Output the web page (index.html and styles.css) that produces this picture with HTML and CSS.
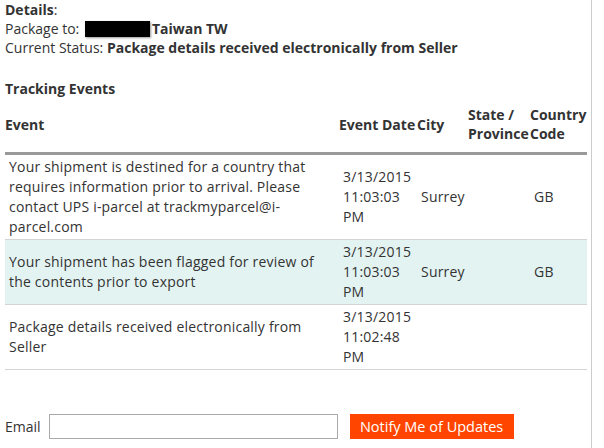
FILE: index.html
```html
<!DOCTYPE html>
<html lang="en">
  <head>
    <meta charset="utf-8" />
    <meta name="viewport" content="width=device-width, initial-scale=1" />
    <title>Tracking Details</title>
    <link rel="stylesheet" href="styles.css">
  </head>
  <body>
    <div class="page">
      <div class="details">
        <b>Details</b>:<br />
        Package to: <span class="redacted"></span><b>Taiwan TW</b><br />
        Current Status: <b>Package details received electronically from Seller</b>
      </div>

      <h3 class="section-title">Tracking Events</h3>
      <table class="events">
        <colgroup>
          <col class="col-event" />
          <col class="col-date" />
          <col class="col-city" />
          <col class="col-state" />
          <col class="col-country" />
        </colgroup>
        <thead>
          <tr>
            <th>Event</th>
            <th class="nowrap">Event Date</th>
            <th>City</th>
            <th>State / Province</th>
            <th>Country Code</th>
          </tr>
        </thead>
        <tbody>
          <tr>
            <td>Your shipment is destined for a country that requires information prior to arrival. Please contact UPS i-parcel at trackmyparcel@i-parcel.com</td>
            <td>3/13/2015 11:03:03 PM</td>
            <td>Surrey</td>
            <td></td>
            <td>GB</td>
          </tr>
          <tr class="alt">
            <td>Your shipment has been flagged for review of the contents prior to export</td>
            <td>3/13/2015 11:03:03 PM</td>
            <td>Surrey</td>
            <td></td>
            <td>GB</td>
          </tr>
          <tr>
            <td>Package details received electronically from Seller</td>
            <td>3/13/2015 11:02:48 PM</td>
            <td></td>
            <td></td>
            <td></td>
          </tr>
        </tbody>
      </table>

      <!-- notify form -->
      <form class="notify">
        <label for="email">Email</label>
        <input type="text" id="email" name="email" />
        <button type="submit">Notify Me of Updates</button>
      </form>
    </div>
  </body>
</html>
```

FILE: styles.css
```css
html, body {
  margin: 0;
  height: 100%;
}

body {
  font-family: "Open Sans", "Noto Sans", sans-serif;
  font-size: 14px;
  color: #333;
  background: #fff;
}

.page {
  width: 592px;
  min-height: 100%;
  box-sizing: border-box;
  padding-left: 5px;
  border-right: 1px solid #ccc;
}

.details {
  line-height: 19px;
}

.redacted {
  display: inline-block;
  width: 65px;
  height: 16px;
  vertical-align: -3px;
  background: #000;
  box-shadow: 1px 1px 2px rgba(0, 0, 0, 0.4);
  margin: 0 2px 0 2px;
}

.section-title {
  font-size: 14px;
  margin: 22px 0 0;
  line-height: 20px;
}

.events {
  width: 582px;
  border-collapse: collapse;
  table-layout: fixed;
  line-height: 20px;
}

.col-event { width: 334px; }
.col-date { width: 78px; }
.col-city { width: 51px; }
.col-state { width: 62px; }
.col-country { width: 57px; }

.events th {
  text-align: left;
  vertical-align: middle;
  padding: 6px 0 9px;
  line-height: 19px;
  border-bottom: 3px solid #999;
}

.events th.nowrap {
  white-space: nowrap;
}

.events td {
  padding: 2px 4px;
  vertical-align: middle;
  letter-spacing: 0.2px;
  border-bottom: 1px solid #d4d4d4;
}

.events tr.alt td {
  background-color: #e3f3f2;
}

.notify {
  display: flex;
  align-items: center;
  margin-top: 44px;
}

.notify label {
  margin-right: 8px;
}

.notify input {
  width: 289px;
  height: 25px;
  box-sizing: border-box;
  border: 1px solid #aaa;
  margin: 0 12px 0 0;
  padding: 2px 4px;
  font-family: inherit;
}

.notify button {
  height: 25px;
  width: 164px;
  border: none;
  background-color: #ff4500;
  color: #fff;
  font-family: inherit;
  font-size: 14.5px;
  padding: 0;
  cursor: pointer;
}
```
